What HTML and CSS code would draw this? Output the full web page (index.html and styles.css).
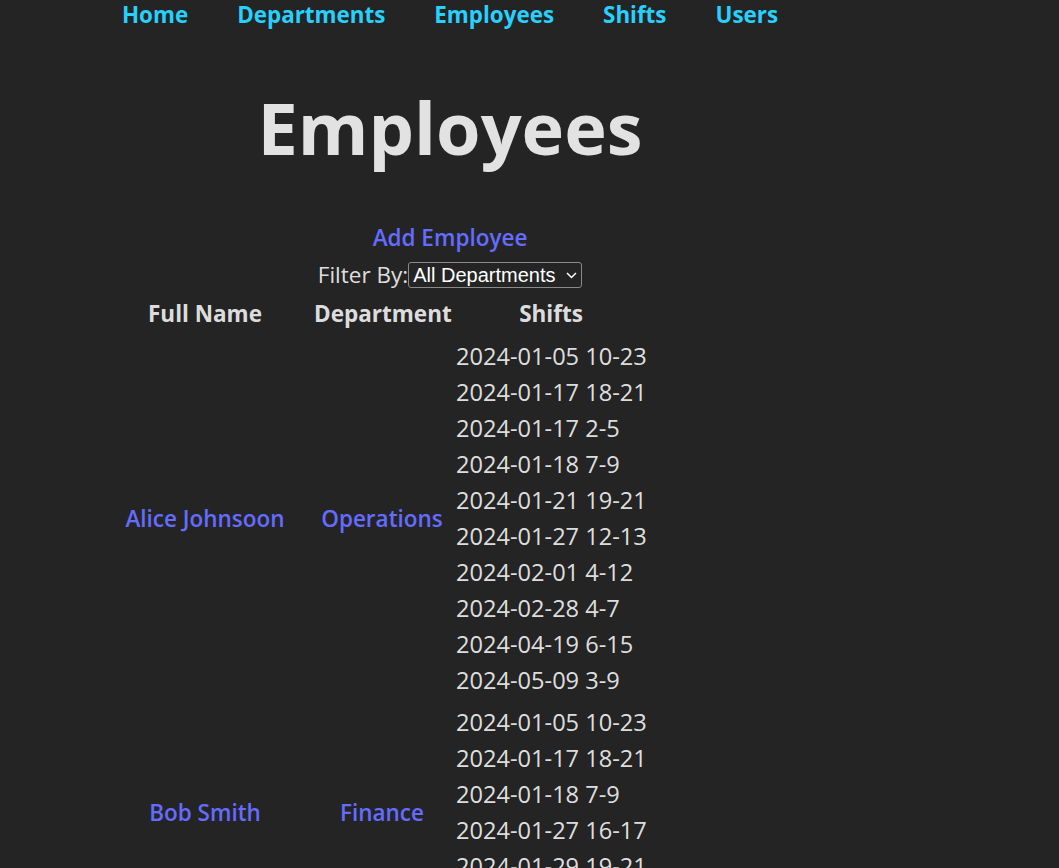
FILE: index.html
```html
<!DOCTYPE html>
<html lang="en">
<head>
<meta charset="utf-8">
<title>Employees</title>
<link rel="stylesheet" href="styles.css">
</head>
<body>
<div class="page">
  <nav class="nav">
    <a href="#">Home</a>
    <a href="#">Departments</a>
    <a href="#">Employees</a>
    <a href="#">Shifts</a>
    <a href="#">Users</a>
  </nav>
  <h1 class="title">Employees</h1>
  <div class="add"><a href="#" class="link">Add Employee</a></div>
  <div class="filter">
    <span>Filter By:</span><span class="select-wrap"><select class="select"><option>All Departments</option></select><svg class="chev" width="11" height="7" viewBox="0 0 11 7"><path d="M1 1 L5.5 5.5 L10 1" fill="none" stroke="#fff" stroke-width="1.5"/></svg></span>
  </div>
  <table class="emp">
    <colgroup><col class="c1"><col class="c2"><col class="c3"></colgroup>
    <thead>
      <tr><th>Full Name</th><th>Department</th><th>Shifts</th></tr>
    </thead>
    <tbody>
      <tr>
        <td class="mid"><a href="#" class="link">Alice Johnsoon</a></td>
        <td class="mid"><a href="#" class="link">Operations</a></td>
        <td class="shifts">
          <div>2024-01-05 10-23</div>
          <div>2024-01-17 18-21</div>
          <div>2024-01-17 2-5</div>
          <div>2024-01-18 7-9</div>
          <div>2024-01-21 19-21</div>
          <div>2024-01-27 12-13</div>
          <div>2024-02-01 4-12</div>
          <div>2024-02-28 4-7</div>
          <div>2024-04-19 6-15</div>
          <div>2024-05-09 3-9</div>
        </td>
      </tr>
      <tr>
        <td class="mid"><a href="#" class="link">Bob Smith</a></td>
        <td class="mid"><a href="#" class="link">Finance</a></td>
        <td class="shifts">
          <div>2024-01-05 10-23</div>
          <div>2024-01-17 18-21</div>
          <div>2024-01-18 7-9</div>
          <div>2024-01-27 16-17</div>
          <div>2024-01-29 19-21</div>
          <div>2024-02-28 4-7</div>
        </td>
      </tr>
    </tbody>
  </table>
</div>
</body>
</html>
```

FILE: styles.css
```css
html, body {
  margin: 0;
  padding: 0;
}
body {
  background: #242424;
  color: rgba(255, 255, 255, 0.87);
  font-family: "Open Sans", "Noto Sans", sans-serif;
  font-size: 24px;
  line-height: 1.5;
}
.page {
  width: 702px;
  padding-left: 99px;
}
.nav {
  display: flex;
  justify-content: center;
  gap: 49px;
  font-size: 22.4px;
  line-height: 30px;
  font-weight: 700;
}
.nav a {
  color: #27d0ff;
  text-decoration: none;
}
.title {
  margin: 55px 0 50px;
  font-size: 72px;
  line-height: 84px;
  font-weight: 700;
  text-align: center;
}
.link {
  color: #646cff;
  font-weight: 600;
  font-size: 22.5px;
  text-decoration: none;
}
.add {
  text-align: center;
  line-height: 36px;
}
.filter {
  display: flex;
  justify-content: center;
  align-items: center;
  height: 37px;
  font-size: 22.5px;
}
.select-wrap {
  position: relative;
  display: inline-block;
}
.select {
  appearance: none;
  -webkit-appearance: none;
  background: #242424;
  color: #fff;
  border: 1px solid #8a8a8a;
  border-radius: 3px;
  font-family: "Liberation Sans", Arial, sans-serif;
  font-size: 20px;
  height: 26px;
  width: 174px;
  padding: 0 22px 0 4px;
  margin: 0;
  display: block;
}
.chev {
  position: absolute;
  right: 5px;
  top: 10px;
  pointer-events: none;
}
.emp {
  border-collapse: separate;
  border-spacing: 0;
  table-layout: fixed;
  width: 550px;
  margin-top: 0;
}
.c1 { width: 212px; }
.c2 { width: 142px; }
.c3 { width: 196px; }
.emp th {
  font-weight: 700;
  font-size: 22.5px;
  padding: 3px;
  line-height: 36px;
  text-align: center;
}
.emp td {
  padding: 3px;
}
.mid {
  text-align: center;
  vertical-align: middle;
}
.shifts {
  text-align: left;
  line-height: 36px;
  white-space: nowrap;
  font-size: 23.6px;
}
```
